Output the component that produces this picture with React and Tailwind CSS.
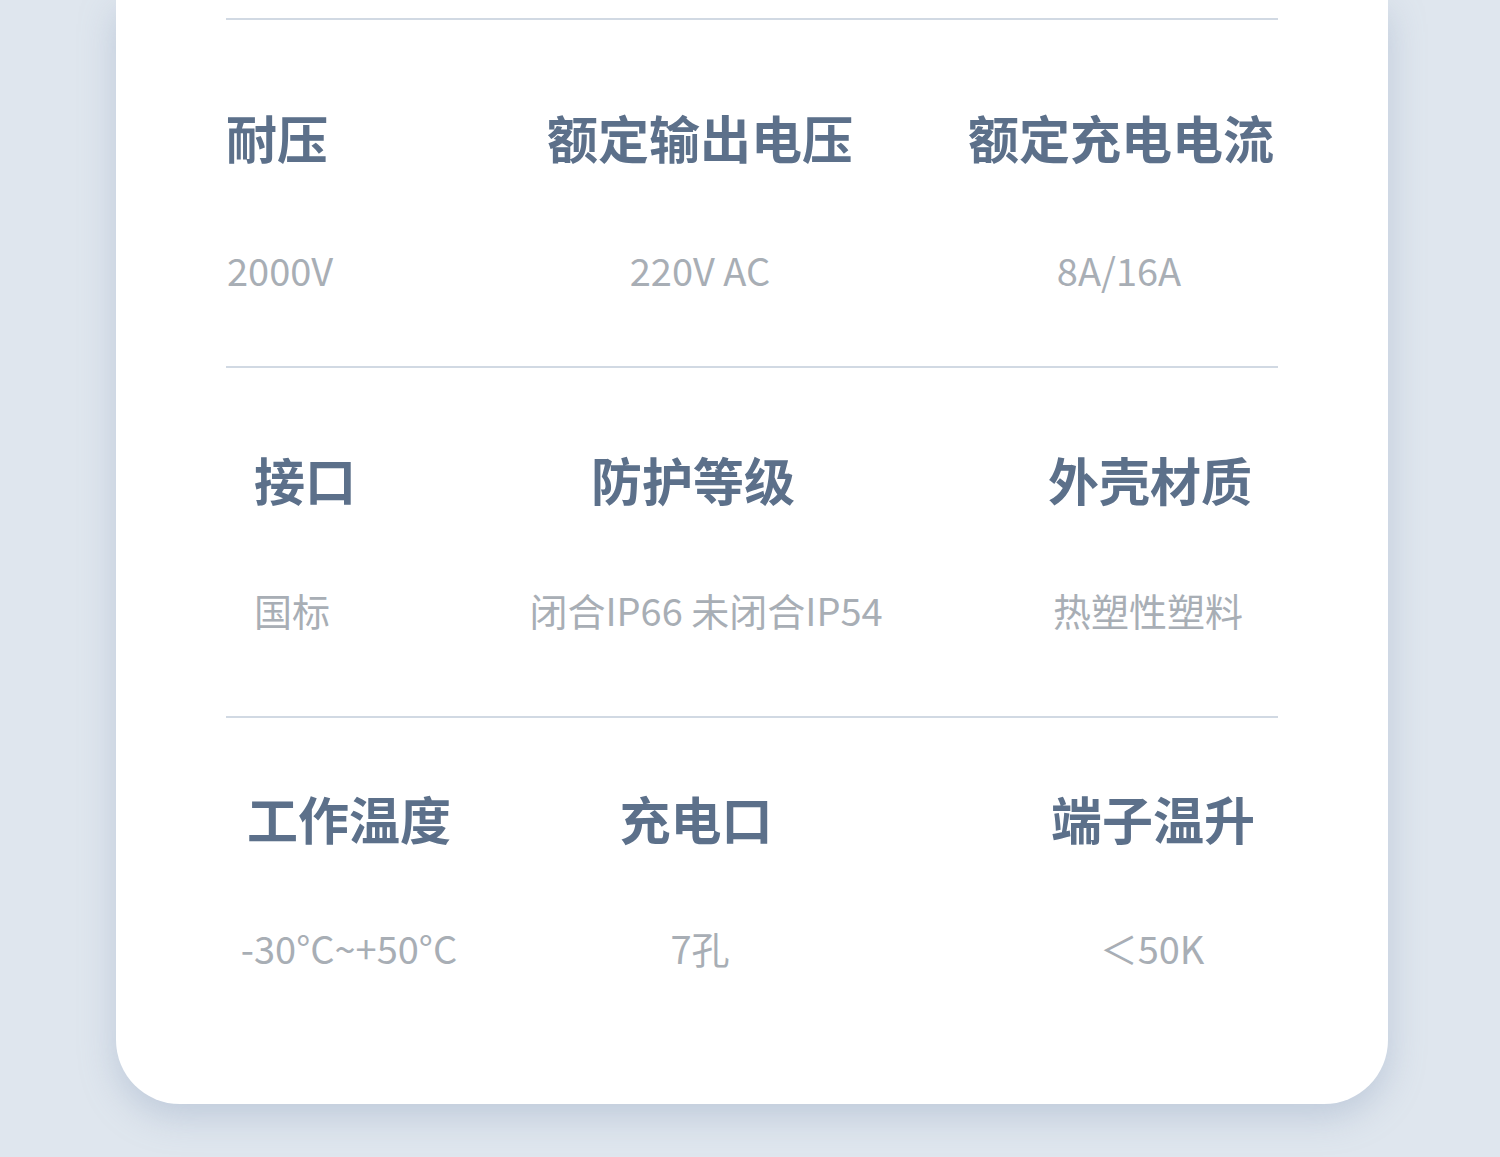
const rows = [
  {
    pad: 'pt-[92px] pb-[77px]',
    gap: 'mt-[89px]',
    cells: [
      { title: '耐压', value: '2000V', box: 'w-[200px] items-start', valueCls: 'ml-[1px]' },
      { title: '额定输出电压', value: '220V AC', box: 'w-[360px] ml-[94px] items-center', valueCls: '' },
      { title: '额定充电电流', value: '8A/16A', box: 'w-[360px] ml-[61px] items-center', valueCls: 'mr-[4px]' },
    ],
  },
  {
    pad: 'pt-[86px] pb-[87px]',
    gap: 'mt-[87px]',
    cells: [
      { title: '接口', value: '国标', box: 'w-[200px] ml-[28px] items-start', valueCls: '' },
      { title: '防护等级', value: '闭合IP66 未闭合IP54', box: 'w-[360px] ml-[59px] items-center', valueCls: 'ml-[26px]' },
      { title: '外壳材质', value: '热塑性塑料', box: 'w-[360px] ml-[97px] items-center', valueCls: 'mr-[4px]' },
    ],
  },
  {
    pad: 'pt-[75px] pb-[137px]',
    gap: 'mt-[86px]',
    cells: [
      { title: '工作温度', value: '-30°C~+50°C', box: 'w-[240px] ml-[3px] items-center', valueCls: '' },
      { title: '充电口', value: '7孔', box: 'w-[360px] ml-[47px] items-center', valueCls: 'ml-[8px]' },
      { title: '端子温升', value: '＜50K', box: 'w-[360px] ml-[97px] items-center', valueCls: 'mr-[2px]' },
    ],
  },
]

function Cell({ cell, gap }) {
  return (
    <div className={`flex flex-col shrink-0 ${cell.box}`}>
      <div className="text-[51px] leading-[50px] font-bold text-[#5c708a] whitespace-nowrap">
        {cell.title}
      </div>
      <div className={`${gap} text-[38px] leading-[38px] text-[#a8aeb5] whitespace-nowrap ${cell.valueCls}`}>
        {cell.value}
      </div>
    </div>
  )
}

export default function App() {
  return (
    <div
      className="min-h-[1157px] w-[1500px] bg-[#dfe6ee] overflow-hidden"
      style={{ fontFamily: '"Noto Sans CJK SC", "Noto Sans", sans-serif' }}
    >
      <div className="ml-[116px] w-[1272px] bg-white rounded-b-[64px] shadow-[0_12px_36px_rgba(130,150,180,0.35)] px-[110px] pt-[18px]">
        {rows.map((row, i) => (
          <div key={i}>
            <div className="h-[2px] bg-[#d1d9e3]" />
            <div className={`flex ${row.pad}`}>
              {row.cells.map((cell) => (
                <Cell key={cell.title} cell={cell} gap={row.gap} />
              ))}
            </div>
          </div>
        ))}
      </div>
    </div>
  )
}
